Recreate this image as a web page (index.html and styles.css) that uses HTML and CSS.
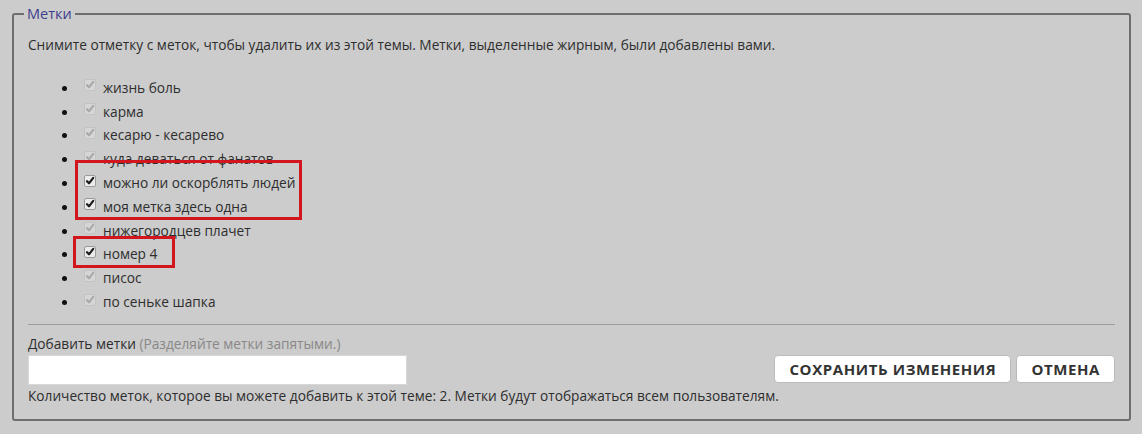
FILE: index.html
```html
<!DOCTYPE html>
<html lang="ru">
<head>
<meta charset="utf-8">
<title>Метки</title>
<link rel="stylesheet" href="styles.css">
</head>
<body>
<div class="wrap">
  <fieldset class="tags">
    <legend class="tags-legend">Метки</legend>
    <p class="intro">Снимите отметку с меток, чтобы удалить их из этой темы. Метки, выделенные жирным, были добавлены вами.</p>
    <ul class="tag-list">
      <li class="tag"><span class="cb cb-off"><svg viewBox="0 0 12 12"><path d="M3 6.2 L5 8.3 L9.2 2.8" /></svg></span><span class="tag-name">жизнь боль</span></li>
      <li class="tag"><span class="cb cb-off"><svg viewBox="0 0 12 12"><path d="M3 6.2 L5 8.3 L9.2 2.8" /></svg></span><span class="tag-name">карма</span></li>
      <li class="tag"><span class="cb cb-off"><svg viewBox="0 0 12 12"><path d="M3 6.2 L5 8.3 L9.2 2.8" /></svg></span><span class="tag-name">кесарю - кесарево</span></li>
      <li class="tag"><span class="cb cb-off"><svg viewBox="0 0 12 12"><path d="M3 6.2 L5 8.3 L9.2 2.8" /></svg></span><span class="tag-name">куда деваться от фанатов</span></li>
      <li class="tag"><span class="cb cb-on"><svg viewBox="0 0 12 12"><path d="M3 6.2 L5 8.3 L9.2 2.8" /></svg></span><span class="tag-name">можно ли оскорблять людей</span></li>
      <li class="tag"><span class="cb cb-on"><svg viewBox="0 0 12 12"><path d="M3 6.2 L5 8.3 L9.2 2.8" /></svg></span><span class="tag-name">моя метка здесь одна</span></li>
      <li class="tag"><span class="cb cb-off"><svg viewBox="0 0 12 12"><path d="M3 6.2 L5 8.3 L9.2 2.8" /></svg></span><span class="tag-name">нижегородцев плачет</span></li>
      <li class="tag"><span class="cb cb-on"><svg viewBox="0 0 12 12"><path d="M3 6.2 L5 8.3 L9.2 2.8" /></svg></span><span class="tag-name">номер 4</span></li>
      <li class="tag"><span class="cb cb-off"><svg viewBox="0 0 12 12"><path d="M3 6.2 L5 8.3 L9.2 2.8" /></svg></span><span class="tag-name">писос</span></li>
      <li class="tag"><span class="cb cb-off"><svg viewBox="0 0 12 12"><path d="M3 6.2 L5 8.3 L9.2 2.8" /></svg></span><span class="tag-name">по сеньке шапка</span></li>
    </ul>
    <hr class="sep">
    <div class="add">
      <label class="add-label" for="newtags">Добавить метки <span class="hint">(Разделяйте метки запятыми.)</span></label>
      <div class="add-row">
        <input class="add-input" id="newtags" type="text">
        <div class="btns">
          <button class="btn" type="button">Сохранить изменения</button>
          <button class="btn" type="button">Отмена</button>
        </div>
      </div>
      <p class="note">Количество меток, которое вы можете добавить к этой теме: 2. Метки будут отображаться всем пользователям.</p>
    </div>
  </fieldset>
</div>
<div class="mark mark-1"></div>
<div class="mark mark-2"></div>
</body>
</html>
```
FILE: styles.css
```css
html, body {
  margin: 0;
  padding: 0;
  background: #cccccc;
}
body {
  position: relative;
  width: 1142px;
  height: 434px;
  overflow: hidden;
  font-family: "Open Sans", "Noto Sans", sans-serif;
  font-size: 13.7px;
  color: #2e2e2e;
}
.wrap {
  padding: 4px 11px 0 12px;
}
.tags {
  margin: 0;
  border: 2px solid #6e6e6e;
  border-radius: 3px;
  padding: 0 14px 0 14px;
  height: 417px;
  box-sizing: border-box;
}
.tags-legend {
  font-size: 14.5px;
  line-height: 20px;
  color: #3e3e8e;
  padding: 0 3px;
  margin-left: -4px;
}
.intro {
  margin: 11px 0 0;
  line-height: 19px;
}
.tag-list {
  list-style: none;
  margin: 22px 0 0;
  padding: 0 0 0 56px;
}
.tag {
  display: flex;
  align-items: center;
  height: 23.8px;
  position: relative;
}
.tag::before {
  content: "";
  position: absolute;
  left: -22px;
  top: 50%;
  width: 5px;
  height: 5px;
  margin-top: -2px;
  border-radius: 50%;
  background: #111;
}
.cb {
  width: 12px;
  height: 12px;
  box-sizing: border-box;
  margin-top: -5px;
  margin-right: 7px;
  border-radius: 2px;
  display: inline-flex;
}
.cb svg {
  width: 12px;
  height: 12px;
  fill: none;
  stroke-width: 2.2;
  stroke-linecap: round;
  stroke-linejoin: round;
}
.cb-off {
  background: #d6d6d6;
  border: 1px solid #c3c3c3;
}
.cb-off svg {
  stroke: #a9a9a9;
  margin: -1px;
}
.cb-on {
  background: #ececec;
  border: 1px solid #9a9a9a;
}
.cb-on svg {
  stroke: #1c1c1c;
  margin: -1px;
}
.tag-name {
  line-height: 18px;
}
.sep {
  border: 0;
  border-top: 1px solid #9c9c9c;
  margin: 10px 0 0;
  height: 0;
}
.add {
  margin-top: 9px;
}
.add-label {
  display: block;
  line-height: 19px;
}
.hint {
  color: #888;
}
.add-row {
  display: flex;
  justify-content: space-between;
  align-items: flex-start;
  margin-top: 2px;
}
.add-input {
  width: 379px;
  height: 30px;
  box-sizing: border-box;
  margin: 0;
  border: 1px solid #d8d8d8;
  background: #fff;
  border-radius: 0;
}
.btns {
  display: flex;
  gap: 5px;
}
.btn {
  height: 28px;
  margin: 0;
  padding: 0 14px;
  background: #fff;
  border: 1px solid #bcbcbc;
  border-radius: 4px;
  font-family: "Open Sans", "Noto Sans", sans-serif;
  font-weight: 700;
  font-size: 15px;
  letter-spacing: 0.6px;
  text-transform: uppercase;
  color: #333;
}
.note {
  margin: 1px 0 0;
  line-height: 19px;
}
.mark {
  position: absolute;
  border: 3px solid #d3161d;
  box-sizing: border-box;
}
.mark-1 {
  left: 75px;
  top: 160px;
  width: 227px;
  height: 60px;
}
.mark-2 {
  left: 73px;
  top: 236px;
  width: 102px;
  height: 32px;
}
```
